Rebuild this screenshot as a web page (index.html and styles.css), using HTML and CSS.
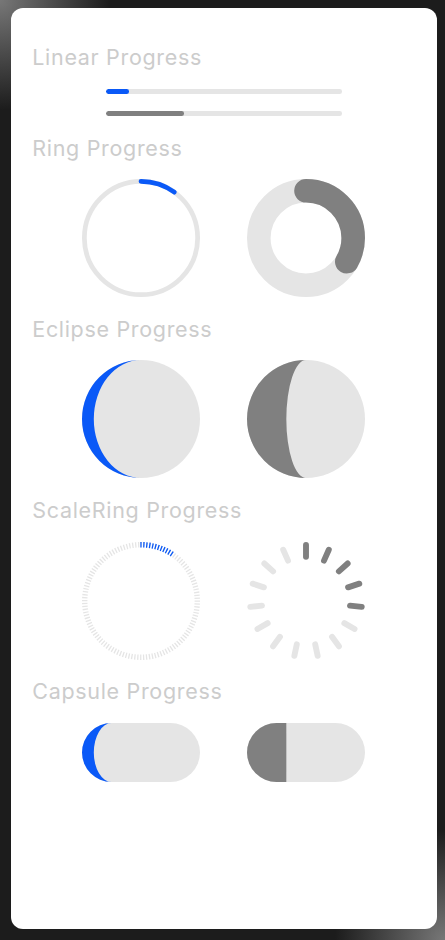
FILE: index.html
```html
<!DOCTYPE html>
<html>
<head>
<meta charset="utf-8">
<link rel="stylesheet" href="styles.css">
</head>
<body>
<div class="card">
  <div class="title">Linear Progress</div>
  <div class="bar"><div class="bar-fill blue" style="width:10%"></div></div>
  <div class="bar"><div class="bar-fill grey" style="width:33.33%"></div></div>

  <div class="title">Ring Progress</div>
  <div class="row">
    <svg class="dial" viewBox="0 0 100 100">
      <circle cx="50" cy="50" r="48" fill="none" stroke="#e5e5e5" stroke-width="4"/>
      <circle cx="50" cy="50" r="48" fill="none" stroke="#0a59f7" stroke-width="4" stroke-linecap="round" stroke-dasharray="30.16 400" transform="rotate(-90 50 50)"/>
    </svg>
    <svg class="dial" viewBox="0 0 100 100">
      <circle cx="50" cy="50" r="40" fill="none" stroke="#e5e5e5" stroke-width="20"/>
      <circle cx="50" cy="50" r="40" fill="none" stroke="#808080" stroke-width="20" stroke-linecap="round" stroke-dasharray="83.78 400" transform="rotate(-90 50 50)"/>
    </svg>
  </div>

  <div class="title">Eclipse Progress</div>
  <div class="row">
    <svg class="dial" viewBox="0 0 100 100">
      <circle cx="50" cy="50" r="50" fill="#e5e5e5"/>
      <path d="M50 0 A50 50 0 0 0 50 100 A40 50 0 0 1 50 0 Z" fill="#0a59f7"/>
    </svg>
    <svg class="dial" viewBox="0 0 100 100">
      <circle cx="50" cy="50" r="50" fill="#e5e5e5"/>
      <path d="M50 0 A50 50 0 0 0 50 100 A16.67 50 0 0 1 50 0 Z" fill="#808080"/>
    </svg>
  </div>

  <div class="title">ScaleRing Progress</div>
  <div class="row">
    <svg class="dial" viewBox="0 0 100 100">
      <circle cx="50" cy="50" r="47.7" fill="none" stroke="#e5e5e5" stroke-width="4.6" stroke-dasharray="1.1 1.3976" transform="rotate(-90.66 50 50)"/>
      <circle cx="50" cy="50" r="47.7" fill="none" stroke="#0a59f7" stroke-width="4.6" stroke-dasharray="1.1 1.3976 1.1 1.3976 1.1 1.3976 1.1 1.3976 1.1 1.3976 1.1 1.3976 1.1 1.3976 1.1 1.3976 1.1 1.3976 1.1 1.3976 1.1 1.3976 1.1 300" transform="rotate(-90.66 50 50)"/>
    </svg>
    <svg class="dial" viewBox="0 0 100 100">
      <g stroke-width="5" stroke-linecap="round">
        <line x1="50" y1="2.5" x2="50" y2="12.5" stroke="#808080"/>
        <line x1="50" y1="2.5" x2="50" y2="12.5" stroke="#808080" transform="rotate(24 50 50)"/>
        <line x1="50" y1="2.5" x2="50" y2="12.5" stroke="#808080" transform="rotate(48 50 50)"/>
        <line x1="50" y1="2.5" x2="50" y2="12.5" stroke="#808080" transform="rotate(72 50 50)"/>
        <line x1="50" y1="2.5" x2="50" y2="12.5" stroke="#808080" transform="rotate(96 50 50)"/>
        <line x1="50" y1="2.5" x2="50" y2="12.5" stroke="#e5e5e5" transform="rotate(120 50 50)"/>
        <line x1="50" y1="2.5" x2="50" y2="12.5" stroke="#e5e5e5" transform="rotate(144 50 50)"/>
        <line x1="50" y1="2.5" x2="50" y2="12.5" stroke="#e5e5e5" transform="rotate(168 50 50)"/>
        <line x1="50" y1="2.5" x2="50" y2="12.5" stroke="#e5e5e5" transform="rotate(192 50 50)"/>
        <line x1="50" y1="2.5" x2="50" y2="12.5" stroke="#e5e5e5" transform="rotate(216 50 50)"/>
        <line x1="50" y1="2.5" x2="50" y2="12.5" stroke="#e5e5e5" transform="rotate(240 50 50)"/>
        <line x1="50" y1="2.5" x2="50" y2="12.5" stroke="#e5e5e5" transform="rotate(264 50 50)"/>
        <line x1="50" y1="2.5" x2="50" y2="12.5" stroke="#e5e5e5" transform="rotate(288 50 50)"/>
        <line x1="50" y1="2.5" x2="50" y2="12.5" stroke="#e5e5e5" transform="rotate(312 50 50)"/>
        <line x1="50" y1="2.5" x2="50" y2="12.5" stroke="#e5e5e5" transform="rotate(336 50 50)"/>
      </g>
    </svg>
  </div>

  <div class="title">Capsule Progress</div>
  <div class="row">
    <svg class="capsule" viewBox="0 0 100 50">
      <rect x="0" y="0" width="100" height="50" rx="25" ry="25" fill="#e5e5e5"/>
      <path d="M25 0 A25 25 0 0 0 25 50 A15 25 0 0 1 25 0 Z" fill="#0a59f7"/>
    </svg>
    <svg class="capsule" viewBox="0 0 100 50">
      <rect x="0" y="0" width="100" height="50" rx="25" ry="25" fill="#e5e5e5"/>
      <path d="M25 0 H33.33 V50 H25 A25 25 0 0 1 25 0 Z" fill="#808080"/>
    </svg>
  </div>
</div>
</body>
</html>
```
FILE: styles.css
```css
html, body {
  margin: 0;
  height: 100%;
}
body {
  box-sizing: border-box;
  padding: 8px 8.5px 11px 11px;
  background:
    radial-gradient(circle at 0 0, rgba(150,150,150,0.75) 0, rgba(150,150,150,0) 110px),
    radial-gradient(circle at 100% 100%, rgba(150,150,150,0.75) 0, rgba(150,150,150,0) 110px),
    #1c1c1c;
  font-family: Inter, Roboto, "Noto Sans", sans-serif;
}
.card {
  box-sizing: border-box;
  height: 100%;
  background: #ffffff;
  border-radius: 12px;
  padding-top: 35.4px;
  display: flex;
  flex-direction: column;
  align-items: center;
  gap: 17.6px;
}
.title {
  width: 90%;
  font-size: 21.5px;
  font-weight: 400;
  line-height: 28px;
  height: 28px;
  color: #cccccc;
  letter-spacing: 0.68px;
}
.bar {
  width: 236px;
  height: 4.7px;
  border-radius: 2.35px;
  background: #e5e5e5;
  overflow: hidden;
  flex: none;
}
.bar-fill {
  height: 100%;
  border-radius: 2.35px;
}
.blue { background: #0a59f7; }
.grey { background: #808080; }
.row {
  display: flex;
  gap: 47px;
}
.dial {
  display: block;
  width: 118px;
  height: 118px;
}
.capsule {
  display: block;
  width: 118px;
  height: 59px;
}
```
